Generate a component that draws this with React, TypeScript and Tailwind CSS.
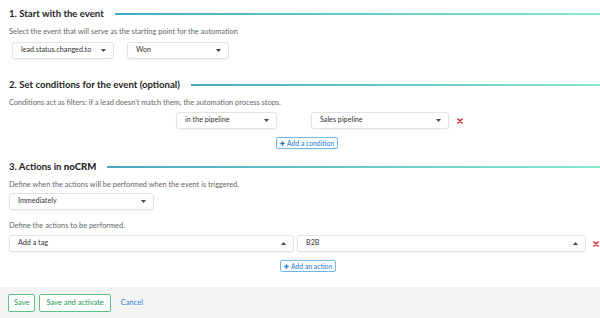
import React from "react";

function Caret({ up = false }: { up?: boolean }) {
  return (
    <svg width="5" height="3" viewBox="0 0 5 3" className="shrink-0">
      {up ? <path d="M0 3 L2.5 0 L5 3 Z" fill="#444" /> : <path d="M0 0 L5 0 L2.5 3 Z" fill="#444" />}
    </svg>
  );
}

function Select({ label, width, up = false }: { label: string; width: string; up?: boolean }) {
  return (
    <div
      className={`${width} h-[17px] flex items-center justify-between pl-[8px] pr-[7px] bg-white border border-[#e3e3e3] rounded-[3px] shadow-[0_1px_2px_rgba(0,0,0,0.05)] text-[7.2px] text-[#333]`}
    >
      <span>{label}</span>
      <Caret up={up} />
    </div>
  );
}

function SectionTitle({ children }: { children: React.ReactNode }) {
  return (
    <div className="flex items-center h-[14px]">
      <h2 className="text-[9.6px] font-bold text-[#1e1e1e] whitespace-nowrap">{children}</h2>
      <div className="flex-1 ml-[11px] h-[2px] bg-gradient-to-r from-[#46a9c4] to-[#86ead0]" />
    </div>
  );
}

function RemoveIcon() {
  return (
    <svg width="6" height="6" viewBox="0 0 6 6" className="shrink-0">
      <path d="M1 1 L5 5 M5 1 L1 5" stroke="#d8262f" strokeWidth="1.6" strokeLinecap="round" />
    </svg>
  );
}

function AddButton({ label, className }: { label: string; className: string }) {
  return (
    <button
      className={`${className} h-[12px] flex items-center gap-[2px] px-[3px] border border-[#6ab7ef] rounded-[2px] bg-white text-[6.8px] text-[#2679d4]`}
    >
      <svg width="5" height="5" viewBox="0 0 5 5">
        <path d="M2.5 0.3 V4.7 M0.3 2.5 H4.7" stroke="#2679d4" strokeWidth="1.3" />
      </svg>
      {label}
    </button>
  );
}

function Hint({ children, className }: { children: React.ReactNode; className: string }) {
  return <p className={`${className} h-[8px] leading-[8px] text-[7.4px] text-[#666]`}>{children}</p>;
}

export default function App() {
  return (
    <div className="w-[600px] h-[318px] bg-white overflow-hidden flex flex-col font-['Lato',sans-serif]">
      <div className="pl-[9px]">
        <div className="mt-[7px]">
          <SectionTitle>1. Start with the event</SectionTitle>
        </div>
        <Hint className="mt-[7px]">Select the event that will serve as the starting point for the automation</Hint>
        <div className="mt-[6px] ml-[3px] flex gap-[13px]">
          <Select label="lead.status.changed.to" width="w-[102px]" />
          <Select label="Won" width="w-[102px]" />
        </div>

        <div className="mt-[19px]">
          <SectionTitle>2. Set conditions for the event (optional)</SectionTitle>
        </div>
        <Hint className="mt-[7px]">Conditions act as filters: if a lead doesn't match them, the automation process stops.</Hint>
        <div className="mt-[5px] ml-[167px] flex items-center">
          <Select label="in the pipeline" width="w-[101px]" />
          <div className="ml-[34px]">
            <Select label="Sales pipeline" width="w-[138px]" />
          </div>
          <div className="ml-[8px]">
            <RemoveIcon />
          </div>
        </div>
        <AddButton label="Add a condition" className="mt-[8px] ml-[267px]" />

        <div className="mt-[11px]">
          <SectionTitle>
            3. Actions in <span className="font-black">noCRM</span>
          </SectionTitle>
        </div>
        <Hint className="mt-[7px]">Define when the actions will be performed when the event is triggered.</Hint>
        <div className="mt-[4px]">
          <Select label="Immediately" width="w-[145px]" />
        </div>
        <Hint className="mt-[12px]">Define the actions to be performed.</Hint>
        <div className="mt-[5px] flex items-center">
          <Select label="Add a tag" width="w-[285px]" up />
          <div className="ml-[3px]">
            <Select label="B2B" width="w-[289px]" up />
          </div>
          <div className="ml-[7px]">
            <RemoveIcon />
          </div>
        </div>
        <AddButton label="Add an action" className="mt-[8px] ml-[271px]" />
      </div>

      <div className="mt-[15px] flex-1 bg-[#f4f4f4] flex items-start pt-[7px] pl-[8px] gap-[4px]">
        <button className="h-[18px] px-[5px] border border-[#5fc088] rounded-[2px] bg-white text-[7.5px] text-[#22994f]">
          Save
        </button>
        <button className="h-[18px] px-[6px] border border-[#5fc088] rounded-[2px] bg-white text-[7.5px] text-[#22994f]">
          Save and activate
        </button>
        <button className="h-[18px] ml-[6px] text-[7.5px] text-[#2b7fe0]">Cancel</button>
      </div>
    </div>
  );
}
